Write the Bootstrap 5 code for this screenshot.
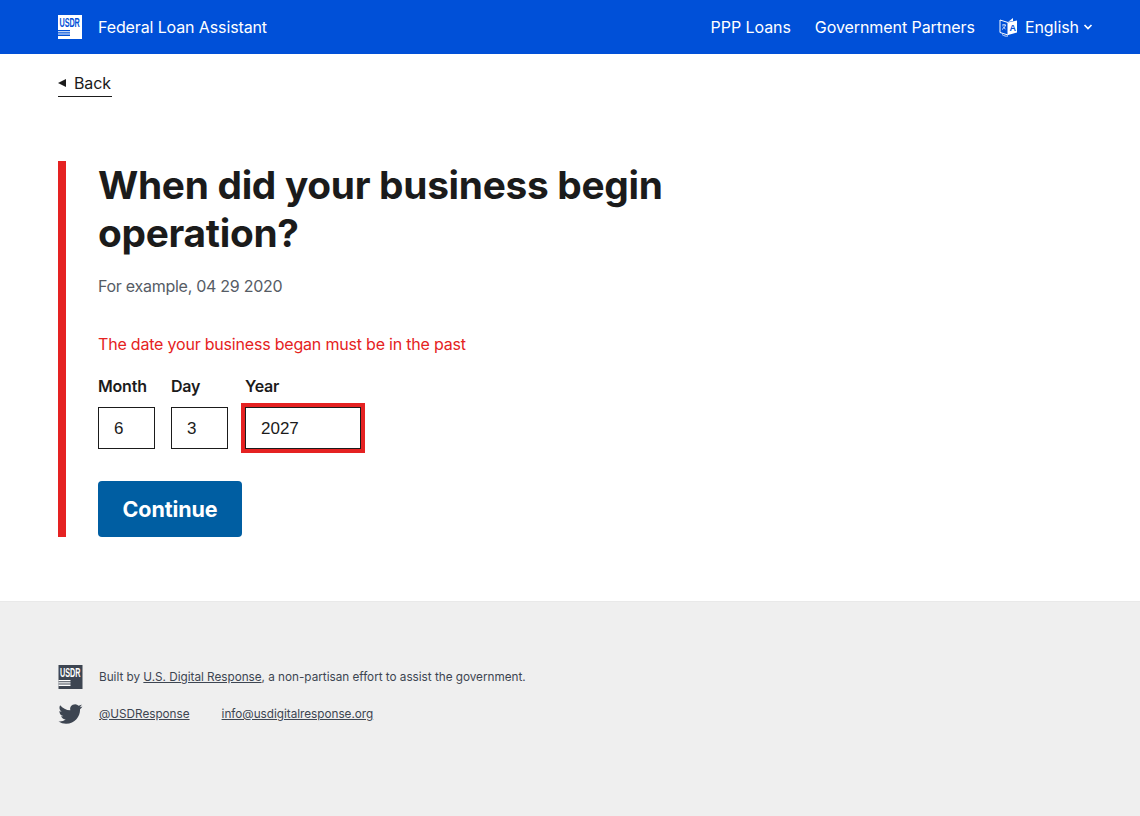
<!DOCTYPE html>
<html lang="en"><head><meta charset="utf-8"><title>Federal Loan Assistant</title>
<link href="https://cdn.jsdelivr.net/npm/bootstrap@5.3.0/dist/css/bootstrap.min.css" rel="stylesheet">
<style>
html,body{height:100%}
body{font-family:Inter,"Liberation Sans",sans-serif;color:#1b1b1b;background:#fff;height:816px;overflow:hidden}
.topbar{background:#0050d8;height:54px;padding:0 47px 0 58px;color:#fff;font-size:16px}
.topbar a{color:#fff;text-decoration:none;letter-spacing:-.12px}
.topbar .navset a{letter-spacing:-.07px}
.brandname{margin-left:16px}
.navset{gap:24px}
.langname{margin-left:7px}
.backrow{padding:20px 58px 0;height:107px}
.backlink{color:#1b1b1b;text-decoration:none;border-bottom:1px solid #1b1b1b;font-size:16px;height:23px;width:54px;line-height:19px;letter-spacing:-.1px;padding-bottom:4px}
.backarrow{font-size:0;width:0;height:0;border:4px solid transparent;border-left:0;border-right:8px solid #1b1b1b;margin-right:8px}
.errblock{margin-left:58px;border-left:8px solid #e52222;padding-left:32px;height:376px}
.ask{font-size:38.85px;font-weight:700;line-height:48px;width:600px;margin:0;letter-spacing:-.3px;color:#1b1b1b}
.hint{color:#565c65;font-size:16px;line-height:24px;margin:17px 0 0;letter-spacing:-.27px}
.errmsg{color:#e52222;font-size:16px;line-height:24px;margin:34px 0 0;letter-spacing:-.2px}
.datefields{margin-top:20px;gap:16px}
.flabel{font-weight:600;font-size:16px;line-height:20px;margin:0 0 11px;letter-spacing:-.2px;display:block}
.dinput{display:block;height:42px;width:57px;border:1px solid #1b1b1b;border-radius:0;padding:2px 15px 0;font-family:"Liberation Sans",sans-serif;font-size:17px;color:#1b1b1b;background:#fff;outline:0}
.yearcol{margin-left:1px}
.dyear{width:116px;outline:4px solid #e52222;outline-offset:0}
.gobtn{margin-top:32px;background:#005ea2;border:0;border-radius:4px;color:#fff;font-weight:700;font-size:21.5px;width:144px;height:56px;padding:0;letter-spacing:-.1px}
.gobtn:hover{background:#005ea2;color:#fff}
.foot{margin-top:64px;background:#efefef;border-top:1px solid #e9e9e9;height:215px;padding:63px 58px 0;font-size:11.75px;color:#3d4551}
.foot a{color:#3d4551;text-decoration:underline}
.footrow{gap:16px;height:24px;letter-spacing:-.02px}
.footrow+.footrow{margin-top:13px}
.footrow>span,.footrow>a{padding-top:2px}
.footicon{width:25px;height:24px;flex:none}
.footlink2{margin-left:16px}
.lg{font-family:"Liberation Sans",sans-serif;font-weight:700}
</style></head>
<body>
<nav class="topbar d-flex align-items-center justify-content-between">
<a href="#" class="d-flex align-items-center">
<svg width="24" height="24" viewBox="0 0 24 24"><rect width="24" height="24" fill="#fff"/><text class="lg" transform="translate(1.500 12) scale(.58 1)" font-size="12.500" fill="#0050d8">USDR</text><path d="M0 15h12v1.300H0zM0 17.300h12v1.300H0zM0 19.600h12v1.300H0z" fill="#0050d8"/></svg>
<span class="brandname">Federal Loan Assistant</span></a>
<div class="navset d-flex align-items-center">
<a href="#">PPP Loans</a><a href="#">Government Partners</a>
<a href="#" class="d-flex align-items-center">
<svg width="19" height="20" viewBox="0 0 19 20"><path d="M1 3l8 2.500V18l-8-2.500z" fill="#0050d8" stroke="#fff" stroke-width="1"/><path d="M9 5l5-1V1l-5 4z" fill="#fff"/><path d="M9 5.500l9-2V15.500l-9 2.500z" fill="#fff"/><text class="lg" x="10.500" y="14" font-size="9" fill="#0050d8">A</text><path d="M3 8h4M5 7v1M6.500 8c-.5 2-2 3.500-3.500 4.500M4 9.500c.5 1 1.500 2 2.500 2.500" fill="none" stroke="#fff" stroke-width=".8"/><path d="M3 17.500c2 1.500 4 2 6 1.500" fill="none" stroke="#fff" stroke-width=".8"/></svg>
<span class="langname">English</span>
<svg width="10" height="8" viewBox="0 0 10 8" class="ms-1"><path d="M1.500 2l3.500 3.500L8.500 2" fill="none" stroke="#fff" stroke-width="1.700"/></svg>
</a></div>
</nav>
<main>
<div class="backrow"><a href="#" class="backlink d-flex align-items-center"><span class="backarrow"></span>Back</a></div>
<section class="errblock">
<h1 class="ask">When did your business begin operation?</h1>
<p class="hint">For example, 04 29 2020</p>
<p class="errmsg">The date your business began must be in the past</p>
<div class="datefields d-flex">
<div><label class="flabel" for="m">Month</label><input id="m" class="dinput" value="6"></div>
<div><label class="flabel" for="d">Day</label><input id="d" class="dinput" value="3"></div>
<div class="yearcol"><label class="flabel" for="y">Year</label><input id="y" class="dinput dyear" value="2027"></div>
</div>
<button class="btn gobtn" type="button">Continue</button>
</section>
</main>
<footer class="foot">
<div class="footrow d-flex align-items-center">
<svg class="footicon" viewBox="0 0 24 24"><rect width="24" height="24" fill="#3d4551"/><text class="lg" transform="translate(1.500 12) scale(.58 1)" font-size="12.500" fill="#fff">USDR</text><path d="M0 15h12v1.300H0zM0 17.300h12v1.300H0zM0 19.600h12v1.300H0z" fill="#fff"/></svg>
<span>Built by <a href="#">U.S. Digital Response</a>, a non-partisan effort to assist the government.</span></div>
<div class="footrow d-flex align-items-center">
<svg class="footicon" viewBox="0 0 24 24"><path d="M23.950 4.570a10 10 0 0 1-2.820.77 4.960 4.960 0 0 0 2.160-2.720c-.95.550-2 .96-3.130 1.190a4.920 4.920 0 0 0-8.380 4.480C7.690 8.090 4.070 6.130 1.640 3.160a4.820 4.820 0 0 0-.67 2.480c0 1.710.87 3.210 2.190 4.100a4.900 4.900 0 0 1-2.230-.62v.06a4.920 4.920 0 0 0 3.950 4.830 5 5 0 0 1-2.210.08 4.940 4.940 0 0 0 4.600 3.420A9.870 9.870 0 0 1 0 19.540a13.940 13.940 0 0 0 7.550 2.210c9.050 0 14-7.500 14-13.980 0-.21 0-.42-.02-.63a9.940 9.940 0 0 0 2.420-2.570z" fill="#3d4551"/></svg>
<a href="#">@USDResponse</a><a href="#" class="footlink2">info@usdigitalresponse.org</a></div>
</footer>
<script src="https://cdn.jsdelivr.net/npm/bootstrap@5.3.0/dist/js/bootstrap.bundle.min.js"></script>
</body></html>
